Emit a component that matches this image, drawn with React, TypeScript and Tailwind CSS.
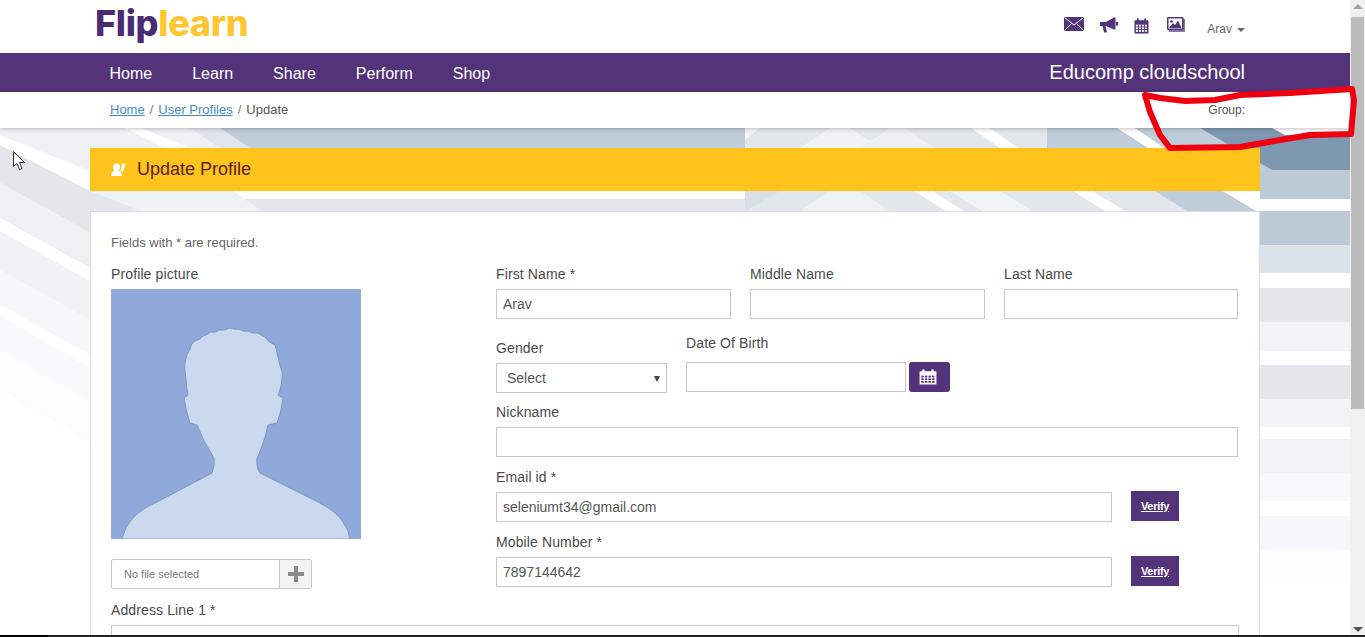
import React from "react";

const purple = "#53337a";

function CalendarIcon({ color, grid, className }: { color: string; grid: string; className?: string }) {
  return (
    <svg viewBox="0 0 16 18" preserveAspectRatio="none" className={className}>
      <rect x="0.5" y="2.5" width="15" height="15" rx="1" fill={color} />
      <rect x="3" y="0.5" width="2" height="4" fill={color} />
      <rect x="11" y="0.5" width="2" height="4" fill={color} />
      <g fill={grid}>
        {[7.5, 10.5, 13.5].map((y) =>
          [2, 5.2, 8.4, 11.6].map((x) => <rect key={`${x}-${y}`} x={x} y={y} width="2.2" height="2" />)
        )}
      </g>
    </svg>
  );
}

function Field({ label, value, className }: { label: string; value?: string; className?: string }) {
  return (
    <div className={className}>
      <label className="mb-[5px] block h-5 text-[14px] leading-5 tracking-[0.12px] text-[#4a4a4a]">{label}</label>
      <TextInput value={value} className="w-full" />
    </div>
  );
}

function TextInput({ value, className }: { value?: string; className?: string }) {
  return (
    <input
      readOnly
      value={value ?? ""}
      className={`block h-[30px] border border-[#c8c8c8] bg-white px-[6px] text-[14px] text-[#555] outline-none ${className ?? ""}`}
    />
  );
}

function Verify() {
  return (
    <a className="mb-px ml-[19px] flex h-[30px] w-[48px] items-center justify-center bg-[#53337a] text-[11px] font-bold tracking-[-0.3px] text-white underline">
      Verify
    </a>
  );
}

function Background() {
  return (
    <svg className="absolute inset-0 h-full w-full" viewBox="0 128 1350 507" preserveAspectRatio="none">
      {/* horizontal bands on the right */}
      <rect x="745" y="128" width="605" height="42" fill="#bfccd9" />
      <rect x="1260" y="170" width="90" height="29" fill="#bccad8" />
      <rect x="1260" y="211" width="90" height="34" fill="#bccad8" />
      <rect x="1260" y="245" width="90" height="28" fill="#dde3ea" />
      <rect x="1260" y="288" width="90" height="34" fill="#e3e7eb" />
      <rect x="1260" y="322" width="90" height="29" fill="#f1f4f7" />
      <rect x="1260" y="365" width="90" height="34" fill="#e3e7eb" />
      <rect x="1260" y="399" width="90" height="28" fill="#f1f4f7" />
      <rect x="1260" y="439" width="90" height="34" fill="#f1f3f6" />
      <rect x="1260" y="473" width="90" height="28" fill="#f6f8fa" />
      <rect x="1260" y="516" width="90" height="34" fill="#f5f7fa" />
      <rect x="1260" y="550" width="90" height="30" fill="#fdfefe" />
      {/* steel block, top right */}
      <polygon points="1200,128 1350,128 1350,170 1272,170" fill="#7f98b2" />
      <polygon points="1272,128 1350,128 1350,135 1285,135" fill="#ffffff" />

      {/* diagonal fans on the left */}
      <polygon points="0,128 220,128 250,148 250,211 141,211 0,128" fill="#e2e7ec" />
      <polygon points="0,128 190,128 250,165 250,211 120,211 0,135" fill="#eff2f5" />
      <polygon points="125,128 141,128 189,148 165,148" fill="#ffffff" />
      <polygon points="205,128 745,128 745,148 240,148" fill="#bfccd9" />
      <polygon points="190,128 220,128 250,148 220,148" fill="#dfe5eb" />
      <polygon points="0,135 0,145 90,191 90,171" fill="#ffffff" />
      <polygon points="0,145 0,183 90,233 90,191" fill="#e3e7eb" />
      <polygon points="0,183 0,218 90,268 90,233" fill="#eef1f4" />
      <polygon points="0,218 0,231 90,281 90,268" fill="#ffffff" />
      <polygon points="0,231 0,270 90,320 90,281" fill="#f0f2f5" />
      <polygon points="0,270 0,305 90,355 90,320" fill="#f5f7f9" />
      <polygon points="0,305 0,315 90,368 90,355" fill="#ffffff" />
      <polygon points="0,315 0,350 90,402 90,368" fill="#f9fafb" />
      <polygon points="0,350 0,390 90,442 90,402" fill="#fcfcfd" />

      {/* lower strip under the yellow bar */}
      <rect x="90" y="191" width="655" height="20" fill="#e3e7eb" />
      <polygon points="90,191 233,191 262,211 141,211" fill="#eff2f5" />
      <polygon points="233,191 745,191 745,199 245,199" fill="#ffffff" />

      {/* chevrons, centre right, top */}
      <rect x="745" y="128" width="302" height="20" fill="#e2e7ec" />
      <polygon points="745,128 760,128 745,140" fill="#f4f6f8" />
      <polygon points="800,148 830,128 850,128 880,148" fill="#f0f3f5" />
      <polygon points="860,148 890,128 905,128 935,148" fill="#edf0f3" />
      <polygon points="971,128 990,128 1018,148 1000,148" fill="#ffffff" />
      <polygon points="1047,128 1117,128 1148,148 1079,148" fill="#bfccd9" />
      <polygon points="1117,128 1135,128 1165,148 1148,148" fill="#ffffff" />
      <polygon points="1135,128 1200,128 1232,148 1165,148" fill="#bfccd9" />

      {/* chevrons, centre right, bottom */}
      <rect x="745" y="191" width="515" height="20" fill="#e2e7ec" />
      <polygon points="745,191 780,191 745,211" fill="#d8dfe7" />
      <polygon points="800,211 830,191 860,191 890,211" fill="#eef1f4" />
      <polygon points="914,191 932,191 964,211 946,211" fill="#ffffff" />
      <polygon points="950,191 1000,191 1032,211 982,211" fill="#f1f4f6" />
      <polygon points="1073,191 1092,191 1125,211 1105,211" fill="#ffffff" />
      <polygon points="1155,191 1223,191 1256,211 1187,211" fill="#bfccd9" />
      <polygon points="1223,191 1260,191 1260,211 1256,211" fill="#ffffff" />
    </svg>
  );
}

function Avatar() {
  return (
    <svg viewBox="0 0 250 250" className="block h-[250px] w-[250px]">
      <rect width="250" height="250" fill="#8fa9db" />
      <path
        d="M119 39 Q124 41 128 40 Q132 43 137 42 Q142 45 147 44 Q151 47 154 48 Q158 54 164 56 Q166 62 167 68 Q168 74 170 79 Q172 84 171 90 Q170 99 168 104 L167 106 L172 109 Q170 124 166 134 L157 136 Q153 155 146 169 Q145 178 149 184 L209 214 Q226 223 232 233 Q238 241 239 250 L11 250 Q14 238 22 229 Q30 220 46 213 L101 184 Q104 176 103 169 Q92 152 86 136 L79 134 Q75 122 73 109 L77 106 Q75 98 75 90 Q73 80 74 73 Q76 64 79 60 Q80 54 84 52 Q90 50 92 47 Q97 46 99 43 Q105 44 108 41 Q113 42 119 39 Z"
        fill="#cbd9ef"
        stroke="#7f96bd"
        strokeWidth="1"
      />
    </svg>
  );
}

export default function App() {
  return (
    <div className="flex h-[637px] w-[1365px] flex-col overflow-hidden bg-white font-['Liberation_Sans',Arial,sans-serif] text-[#444]">
      <div className="relative flex min-h-0 flex-1">
        <div className="flex w-[1350px] flex-col">
          {/* top header */}
          <header className="h-[53px] bg-white">
            <div className="mx-auto flex h-full w-[1170px] items-start justify-between pr-[15px] pl-[5px]">
              <div className="mt-[-2px] font-['Inter',sans-serif] text-[36px] leading-[50px] font-extrabold tracking-[-0.3px]">
                <span className="text-[#4b2c73]">Flip</span>
                <span className="text-[#fdc731]">learn</span>
              </div>
              <div className="flex items-start">
                <svg viewBox="0 0 20 14" className="mt-[17px] h-[14px] w-[20px]">
                  <rect width="20" height="14" fill={purple} />
                  <path d="M0.5 0.5 L10 8 L19.5 0.5 M0.5 13.5 L7.5 6.5 M19.5 13.5 L12.5 6.5" fill="none" stroke="#ffffff" strokeWidth="1" />
                </svg>
                <svg viewBox="0 0 18 16" className="mt-[17px] ml-4 h-4 w-[18px]">
                  <path d="M0 5 H6 L14 0.5 H15.5 V12.5 H14 L6 9 H5.5 L7 15.5 H4 L2.5 9 H0 Z" fill={purple} />
                  <rect x="16" y="5" width="2" height="3.5" fill={purple} />
                </svg>
                <CalendarIcon color={purple} grid="#ffffff" className="mt-[18px] ml-4 h-4 w-[15px]" />
                <svg viewBox="0 0 18 15" className="mt-[17px] ml-[18px] h-[15px] w-[18px]">
                  <rect x="2" y="2" width="16" height="13" fill="#8a76a6" />
                  <rect x="0" y="0" width="16.5" height="13" rx="1" fill={purple} />
                  <rect x="1.5" y="1.5" width="13.5" height="10" fill="#ffffff" />
                  <circle cx="4.5" cy="4.5" r="1.3" fill={purple} />
                  <path d="M2 11 L6 6 L8 8 L11 3.5 L14.5 11 Z" fill={purple} />
                </svg>
                <div className="mt-[21px] ml-[22px] flex items-center text-[12px] leading-4 text-[#666]">
                  Arav
                  <span className="mt-[2px] ml-[5px] h-0 w-0 border-x-4 border-t-4 border-x-transparent border-t-[#666]" />
                </div>
              </div>
            </div>
          </header>

          {/* purple nav */}
          <nav className="h-[39px] bg-[#53337a]">
            <div className="mx-auto flex h-full w-[1170px] items-center justify-between pr-[15px] pl-[19.5px] text-white">
              <ul className="mt-[2px] flex gap-10 text-[16px]">
                <li>Home</li>
                <li>Learn</li>
                <li>Share</li>
                <li>Perform</li>
                <li>Shop</li>
              </ul>
              <span className="-mt-[2px] text-[20px]">Educomp cloudschool</span>
            </div>
          </nav>

          {/* breadcrumb */}
          <div className="relative z-10 h-9 bg-white shadow-[0_1px_4px_rgba(0,0,0,0.25)]">
            <div className="mx-auto flex h-full w-[1170px] items-center justify-between pr-[15px] pl-5 text-[13px]">
              <div className="flex text-[#555]">
                <a className="text-[#428bca] underline">Home</a>
                <span className="px-[5px] text-[#777]">/</span>
                <a className="text-[#428bca] underline">User Profiles</a>
                <span className="px-[5px] text-[#777]">/</span>
                <span>Update</span>
              </div>
              <span className="text-[12px] text-[#555]">Group:</span>
            </div>
          </div>

          {/* main */}
          <main className="relative min-h-0 flex-1 overflow-hidden">
            <Background />
            <div className="relative mx-auto w-[1170px] pt-5">
              <div className="flex h-[43px] items-center bg-[#fec41c] pl-[21px]">
                <svg viewBox="0 0 15 13" className="h-[13px] w-[15px]">
                  <circle cx="5.5" cy="4" r="3.5" fill="#ffffff" />
                  <path d="M0 13 Q0.5 7.5 5.5 7 Q10.5 7.5 11 13 Z" fill="#ffffff" />
                  <path d="M11 0.5 L14.5 1 L12 9 L9.5 8 Z" fill="#ffffff" />
                </svg>
                <h1 className="ml-[11px] text-[18px] text-[#5b2318]">Update Profile</h1>
              </div>

              <section className="mt-5 border border-[#dddddd] bg-white pt-[22px] pr-[20px] pb-6 pl-5">
                <p className="text-[13px] leading-[18px] text-[#666]">Fields with * are required.</p>
                <div className="mt-[12px] flex">
                  <div className="w-[385px] shrink-0">
                    <label className="mb-[5px] block h-5 text-[14px] leading-5 tracking-[0.12px] text-[#4a4a4a]">Profile picture</label>
                    <Avatar />
                    <div className="mt-5 flex h-[30px] w-[201px] overflow-hidden rounded-[2px] border border-[#c8c8c8]">
                      <span className="flex flex-1 items-center pl-3 text-[11px] text-[#777]">No file selected</span>
                      <span className="flex w-[32px] items-center justify-center border-l border-[#c8c8c8] bg-[#f3f3f3]">
                        <svg viewBox="0 0 16 16" className="h-4 w-4">
                          <path d="M6 0 H10 V6 H16 V10 H10 V16 H6 V10 H0 V6 H6 Z" fill="#8c8c8c" />
                        </svg>
                      </span>
                    </div>
                  </div>
                  <div className="w-[742px] shrink-0">
                    <div className="flex gap-[19px]">
                      <Field label="First Name *" value="Arav" className="w-[235px]" />
                      <Field label="Middle Name" className="w-[235px]" />
                      <Field label="Last Name" className="w-[234px]" />
                    </div>
                    <div className="flex items-start">
                      <div className="mt-[19px] w-[171px]">
                        <label className="mb-[5px] block h-5 text-[14px] leading-5 tracking-[0.12px] text-[#4a4a4a]">Gender</label>
                        <div className="flex h-[30px] items-center justify-between border border-[#c8c8c8] pr-[6px] pl-[10px] text-[14px] text-[#555]">
                          Select
                          <span className="mt-[1px] h-0 w-0 border-x-[3px] border-t-[6px] border-x-transparent border-t-[#444]" />
                        </div>
                      </div>
                      <div className="mt-[14px] ml-[19px]">
                        <label className="mb-[9px] block h-5 text-[14px] leading-5 tracking-[0.12px] text-[#4a4a4a]">Date Of Birth</label>
                        <div className="flex">
                          <TextInput className="w-[220px]" />
                          <button className="ml-[3px] flex h-[30px] w-[41px] items-center justify-center rounded-[3px] bg-[#53337a] pr-[3px]">
                            <CalendarIcon color="#ffffff" grid="#53337a" className="h-4 w-[18px]" />
                          </button>
                        </div>
                      </div>
                    </div>
                    <Field label="Nickname" className="mt-[9px]" />
                    <div className="mt-[10px] flex">
                      <Field label="Email id *" value="seleniumt34@gmail.com" className="w-[616px]" />
                      <div className="flex items-end"><Verify /></div>
                    </div>
                    <div className="mt-[10px] flex">
                      <Field label="Mobile Number *" value="7897144642" className="w-[616px]" />
                      <div className="flex items-end"><Verify /></div>
                    </div>
                  </div>
                </div>
                <Field label="Address Line 1 *" className="mt-[11px]" />
              </section>
            </div>

            {/* mouse cursor */}
            <svg viewBox="0 0 13 20" className="absolute top-[23px] left-[13px] h-5 w-[13px]">
              <path d="M0.5 0.5 V15.5 L4 12.5 L6.5 18.5 L9 17.5 L6.5 11.5 L11.5 11.5 Z" fill="#ffffff" stroke="#333" strokeWidth="1" />
            </svg>
          </main>
        </div>

        {/* scrollbar */}
        <div className="flex w-[15px] flex-col items-center bg-[#f0f0f0]">
          <span className="mt-[4px] h-0 w-0 border-x-[5px] border-b-[5px] border-x-transparent border-b-[#a3a3a3]" />
          <div className="mt-2 h-[392px] w-[13px] bg-[#bcbcbc]" />
          <span className="mt-auto mb-[3px] h-0 w-0 border-x-[5px] border-t-[5px] border-x-transparent border-t-[#505050]" />
        </div>

        {/* red marker scribble over the page */}
        <svg className="pointer-events-none absolute top-0 left-0 z-20 h-[160px] w-[1365px]" viewBox="0 0 1365 160">
          <path
            d="M1145 95 L1160 98 L1185 101 L1215 100 L1240 95 L1290 93 L1352 89 L1354 100 L1351 134 L1310 135 L1280 140 L1240 147 L1170 148 L1160 135 L1150 112 Z"
            fill="none"
            stroke="#f0000f"
            strokeWidth="6"
            strokeLinejoin="round"
          />
        </svg>
      </div>
      <div className="flex h-[2px] shrink-0">
        <div className="w-[48px] bg-black" />
        <div className="flex-1 bg-[#222]" />
      </div>
    </div>
  );
}
